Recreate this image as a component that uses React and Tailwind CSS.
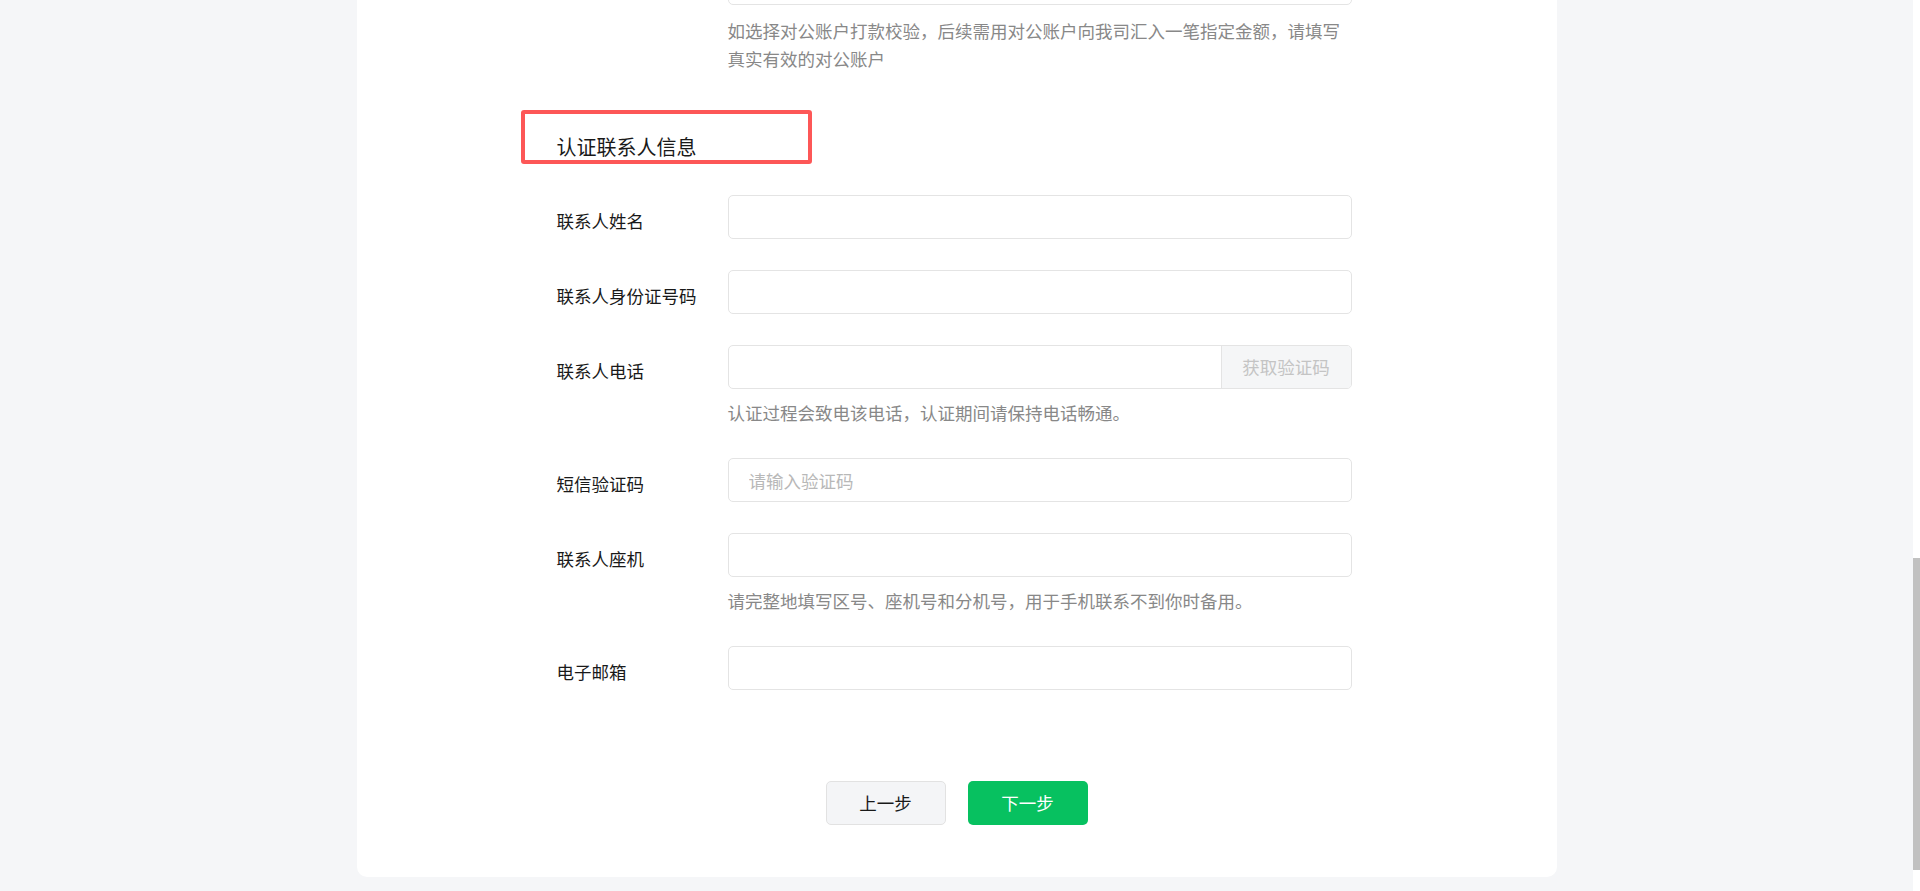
import React from "react";

// Form rows
const rows = [
    { label: "联系人姓名" },
    { label: "联系人身份证号码" },
    { label: "联系人电话", withCode: true, hint: "认证过程会致电该电话，认证期间请保持电话畅通。" },
    { label: "短信验证码", placeholder: "请输入验证码" },
    { label: "联系人座机", hint: "请完整地填写区号、座机号和分机号，用于手机联系不到你时备用。" },
    { label: "电子邮箱" },
];

const Field = ({ label, placeholder, withCode, hint }) => {
    return (
        <div className="flex items-start mb-[31px] last:mb-0">
            <div className="w-[171px] h-[44px] pt-[4px] leading-[44px] text-[#191919]">{label}</div>
            <div className="w-[624px]">
                {withCode ? (
                    <div className="flex h-[44px] border border-[#e4e4e4] rounded-[5px] overflow-hidden">
                        <input className="flex-1 min-w-0 px-[20px] outline-none" />
                        <div className="w-[130px] flex items-center justify-center border-l border-[#e4e4e4] bg-[#f5f6f7] text-[#c4c4c4]">
                            获取验证码
                        </div>
                    </div>
                ) : (
                    <input
                        placeholder={placeholder}
                        className="block w-full h-[44px] px-[20px] border border-[#e4e4e4] rounded-[5px] outline-none placeholder:text-[#b8b8b8]"
                    />
                )}
                {hint && (
                    <p className="mt-[10px] leading-[28px] text-[#888888]">{hint}</p>
                )}
            </div>
        </div>
    );
};

const App = () => {
    return (
        <div className="flex h-[891px] overflow-hidden bg-[#f5f6f8] font-['Noto_Sans_CJK_SC',sans-serif] text-[17.5px]">
            {/* Page */}
            <div className="flex-1 min-w-0 flex flex-col items-center">
                <div className="w-[1200px] -mt-[39px] bg-white rounded-[10px] pb-[52px]">
                    <div className="pl-[200px]">
                        {/* Previous section tail */}
                        <div className="flex">
                            <div className="w-[171px]" />
                            <div className="w-[624px]">
                                <div className="h-[44px] border border-[#e4e4e4] rounded-[5px]" />
                                <p className="mt-[12px] leading-[28px] text-[#888888]">
                                    如选择对公账户打款校验，后续需用对公账户向我司汇入一笔指定金额，请填写真实有效的对公账户
                                </p>
                            </div>
                        </div>

                        {/* Section title */}
                        <div className="relative mt-[60px] mb-[34px] leading-[28px] text-[20px] text-[#191919]">
                            认证联系人信息
                            <div className="absolute -left-[36px] -top-[23px] w-[291px] h-[54px] border-[4px] border-[#fd5757] rounded-[3px]" />
                        </div>

                        {/* Fields */}
                        <div>
                            {rows.map((row) => (
                                <Field key={row.label} {...row} />
                            ))}
                        </div>
                    </div>

                    {/* Actions */}
                    <div className="flex justify-center gap-[22px] mt-[91px]">
                        <button className="w-[120px] h-[44px] rounded-[5px] border border-[#e2e2e2] bg-[#f4f5f7] text-[#191919]">
                            上一步
                        </button>
                        <button className="w-[120px] h-[44px] rounded-[5px] bg-[#07c160] text-white">
                            下一步
                        </button>
                    </div>
                </div>
            </div>

            {/* Scrollbar */}
            <div className="w-[7px] bg-white pt-[558px]">
                <div className="h-[312px] bg-[#c1c1c1]" />
            </div>
        </div>
    );
};

export default App;
